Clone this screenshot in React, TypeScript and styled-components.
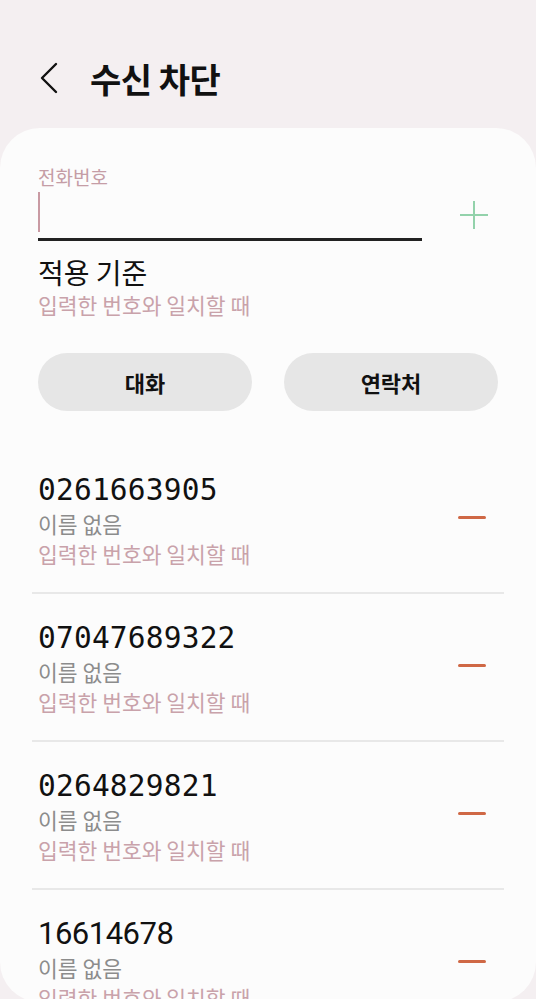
import React from 'react';
import styled, { createGlobalStyle } from 'styled-components';

const KR = `"Noto Sans CJK KR", "Noto Sans", sans-serif`;

const GlobalStyle = createGlobalStyle`
  html, body {
    margin: 0;
    padding: 0;
    background: #f4eff1;
    font-family: ${KR};
    overflow: hidden;
  }
`;

type Blocked = { number: string; mono: boolean };

const blockedList: Blocked[] = [
  { number: '0261663905', mono: true },
  { number: '07047689322', mono: true },
  { number: '0264829821', mono: true },
  { number: '16614678', mono: false },
];

export default function App() {
  return (
    <>
      <GlobalStyle />
      <Screen>
        <Header>
          <BackButton>
            <svg width="20" height="32" viewBox="0 0 20 32" fill="none">
              <path d="M17 2 L3 16 L17 30" stroke="#111" strokeWidth="2.4" strokeLinecap="round" strokeLinejoin="round" />
            </svg>
          </BackButton>
          <Title>수신 차단</Title>
        </Header>

        <Card>
          <FieldLabel>전화번호</FieldLabel>
          <InputRow>
            <InputBox>
              <Cursor />
            </InputBox>
            <PlusButton>
              <svg width="32" height="32" viewBox="0 0 32 32" fill="none">
                <path d="M16 2 V30 M2 16 H30" stroke="#93d2ab" strokeWidth="2" />
              </svg>
            </PlusButton>
          </InputRow>

          <RuleTitle>적용 기준</RuleTitle>
          <SubText>입력한 번호와 일치할 때</SubText>

          <ButtonRow>
            <PillButton>대화</PillButton>
            <PillButton>연락처</PillButton>
          </ButtonRow>

          <List>
            {blockedList.map((item) => (
              <Item key={item.number}>
                <ItemText>
                  <Number $mono={item.mono}>{item.number}</Number>
                  <NameText>이름 없음</NameText>
                  <SubText>입력한 번호와 일치할 때</SubText>
                </ItemText>
                <MinusButton>
                  <MinusBar />
                </MinusButton>
              </Item>
            ))}
          </List>
        </Card>
      </Screen>
    </>
  );
}

const Screen = styled.div`
  width: 536px;
  height: 999px;
  overflow: hidden;
  display: flex;
  flex-direction: column;
`;

const Header = styled.div`
  height: 128px;
  flex-shrink: 0;
  display: flex;
  align-items: center;
  padding: 28px 0 0 39px;
  box-sizing: border-box;
`;

const BackButton = styled.div`
  width: 20px;
  height: 32px;
  display: flex;
  margin-right: 31px;
`;

const Title = styled.h1`
  margin: 0;
  font-family: ${KR};
  font-size: 34px;
  font-weight: 700;
  color: #111;
  letter-spacing: -0.5px;
`;

const Card = styled.div`
  height: 874px;
  flex-shrink: 0;
  background: #fcfcfc;
  border-radius: 40px;
  padding: 36px 38px 0;
  box-sizing: border-box;
  overflow: hidden;
`;

const FieldLabel = styled.div`
  font-size: 19px;
  line-height: 26px;
  color: #c59da6;
`;

const InputRow = styled.div`
  display: flex;
  align-items: center;
`;

const InputBox = styled.div`
  width: 384px;
  height: 48px;
  border-bottom: 3px solid #222;
  display: flex;
  align-items: flex-start;
`;

const Cursor = styled.div`
  width: 2px;
  height: 40px;
  margin-top: 2px;
  background: #c99aa3;
`;

const PlusButton = styled.div`
  margin-left: 36px;
  margin-top: -2px;
  display: flex;
`;

const RuleTitle = styled.div`
  margin-top: 13px;
  font-size: 28px;
  line-height: 36px;
  color: #111;
`;

const SubText = styled.div`
  font-size: 21.5px;
  line-height: 30px;
  color: #c9a2aa;
  white-space: nowrap;
`;

const ButtonRow = styled.div`
  display: grid;
  grid-template-columns: 1fr 1fr;
  gap: 32px;
  margin-top: 33px;
`;

const PillButton = styled.button`
  height: 58px;
  border: none;
  border-radius: 29px;
  background: #e6e6e6;
  font-family: ${KR};
  font-size: 22px;
  font-weight: 700;
  color: #111;
`;

const List = styled.div`
  margin: 35px -6px 0;
`;

const Item = styled.div`
  display: flex;
  align-items: center;
  justify-content: space-between;
  padding: 26px 18px 23px 6px;
  border-bottom: 2px solid #e8e8e8;
`;

const ItemText = styled.div`
  display: flex;
  flex-direction: column;
`;

const Number = styled.div<{ $mono: boolean }>`
  font-family: ${(p) => (p.$mono ? `"DejaVu Sans Mono", monospace` : `Roboto, sans-serif`)};
  font-size: ${(p) => (p.$mono ? '29.5px' : '31px')};
  line-height: 36px;
  color: #111;
  letter-spacing: ${(p) => (p.$mono ? '0.2px' : '-0.5px')};
`;

const NameText = styled.div`
  font-size: 21.5px;
  line-height: 31px;
  color: #8c8c8c;
`;

const MinusButton = styled.div`
  width: 28px;
  display: flex;
  margin-top: -6px;
`;

const MinusBar = styled.div`
  width: 28px;
  height: 3px;
  border-radius: 2px;
  background: #cf6845;
`;
